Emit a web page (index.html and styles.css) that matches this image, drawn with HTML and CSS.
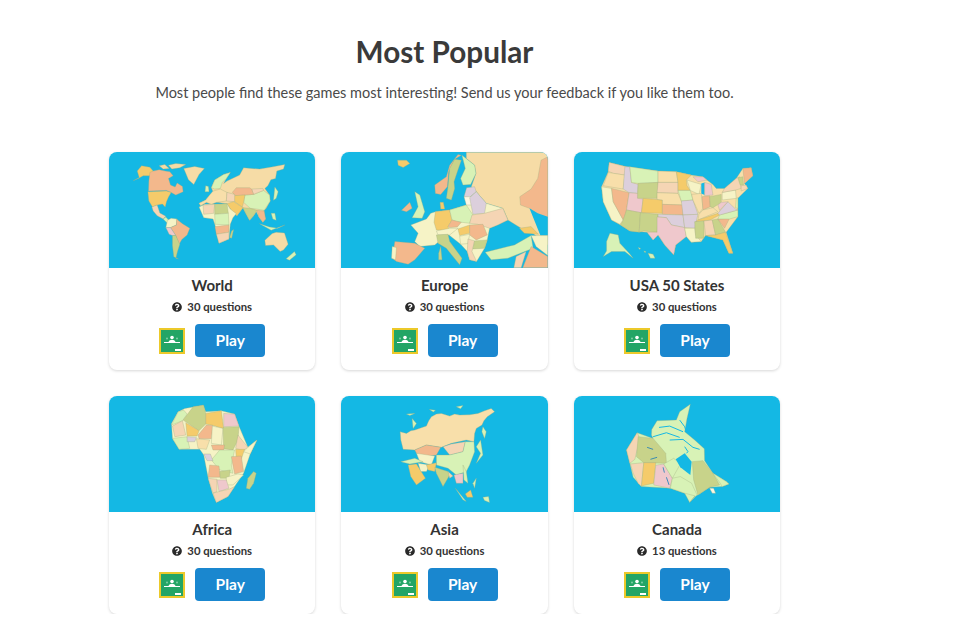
FILE: index.html
```html
<!DOCTYPE html>
<html lang="en">
<head>
<meta charset="utf-8">
<title>Most Popular</title>
<link rel="stylesheet" href="styles.css">
</head>
<body>
<svg class="defs" width="0" height="0" aria-hidden="true">
  <symbol id="q" viewBox="0 0 512 512"><path d="M504 256c0 136.997-111.043 248-248 248S8 392.997 8 256C8 119.083 119.043 8 256 8s248 111.083 248 248zM262.655 90c-54.497 0-89.255 22.957-116.549 63.758-3.536 5.286-2.353 12.415 2.715 16.258l34.699 26.31c5.205 3.947 12.621 3.008 16.665-2.122 17.864-22.658 30.113-35.797 57.303-35.797 20.429 0 45.698 13.148 45.698 32.958 0 14.976-12.363 22.667-32.534 33.976C247.128 238.528 216 254.941 216 296v4c0 6.627 5.373 12 12 12h56c6.627 0 12-5.373 12-12v-1.333c0-28.462 83.186-29.647 83.186-106.667 0-58.002-60.165-102-116.531-102zM256 338c-25.365 0-46 20.635-46 46 0 25.364 20.635 46 46 46s46-20.636 46-46c0-25.365-20.635-46-46-46z"/></symbol>
  <symbol id="gc" viewBox="0 0 26 26">
    <rect x="1" y="1" width="24" height="24" class="gc-bg"/>
    <circle cx="13" cy="9.500" r="1.800" class="gc-w"/>
    <path d="M9.500 14c.5-1.500 2-2.200 3.500-2.200s3 .7 3.500 2.200z" class="gc-w"/>
    <circle cx="8" cy="10.500" r="1" class="gc-f"/>
    <circle cx="18" cy="10.500" r="1" class="gc-f"/>
    <rect x="5" y="14" width="16" height="1" class="gc-w"/>
    <rect x="16" y="21" width="6" height="2" class="gc-w"/>
  </symbol>
</svg>
<main class="page">
  <header class="intro">
    <h1>Most Popular</h1>
    <p>Most people find these games most interesting! Send us your feedback if you like them too.</p>
  </header>
  <section class="grid">

    <article class="card">
      <svg class="map" viewBox="27 21 621 348"><g class="land">
        <polygon class="y" points="100,107 118,97 112,78 125,62 150,66 160,78 158,92 148,92 130,92 115,100"/>
        <polygon class="o" points="150,82 160,78 178,74 196,78 210,80 220,92 206,100 212,120 226,126 232,114 248,124 250,140 228,150 214,142 200,136 146,138 147,108"/>
        <polygon class="p" points="178,62 195,58 208,70 190,72"/>
        <polygon class="p" points="206,60 228,55 258,58 240,68 216,72"/>
        <polygon class="p" points="252,70 285,64 314,70 298,88 282,118 266,104"/>
        <polygon class="y" points="144,140 200,138 214,142 206,156 200,170 196,186 188,177 172,180 158,186 147,168"/>
        <polygon class="s" points="156,186 172,180 180,204 198,214 190,222 172,212 160,198"/>
        <polygon class="g" points="190,222 198,216 212,232 206,238"/>
        <polygon class="c" points="203,226 214,220 232,222 230,240 212,248 198,248"/>
        <polygon class="o" points="230,222 248,236 270,250 262,270 246,284 238,298 228,272 212,248 230,240"/>
        <polygon class="k" points="198,248 212,248 228,272 218,272 208,268"/>
        <polygon class="v" points="218,272 228,272 240,298 233,320 228,340 236,342 222,336 218,302"/>
        <polygon class="p" points="303,182 298,175 318,165 330,150 340,140 335,128 345,105 372,88 392,82 380,100 372,115 382,108 420,90 432,68 480,72 520,65 556,58 552,72 532,78 528,100 514,104 505,122 496,130 510,150 512,168 500,190 492,198 498,222 490,232 478,216 470,200 462,212 450,226 440,208 430,188 412,212 392,192 382,176 350,172 335,178 320,172"/>
        <polygon class="g" points="335,128 345,105 372,88 392,82 380,100 368,112 362,130 345,132"/>
        <polygon class="l" points="303,182 298,175 318,165 330,150 340,138 362,132 382,142 380,168 350,172 335,178 320,172"/>
        <polygon class="g" points="436,150 462,148 492,136 510,150 512,168 494,196 470,192 452,190 432,172"/>
        <polygon class="s" points="456,132 490,130 492,136 462,148"/>
        <polygon class="o" points="398,142 410,128 450,128 456,132 462,148 436,150 408,152"/>
        <polygon class="y" points="400,152 436,150 432,172 428,186 405,170"/>
        <polygon class="v" points="430,188 452,190 472,196 462,212 450,226 440,208"/>
        <polygon class="o" points="472,196 494,198 498,222 490,232 478,216"/>
        <polygon class="s" points="382,142 405,148 405,170 380,168"/>
        <polygon class="y" points="382,176 402,170 430,188 412,212 392,192"/>
        <polygon class="g" points="318,122 326,124 328,140 316,140"/>
        <polygon class="g" points="480,236 510,246 535,250 556,240 515,256"/>
        <polygon class="g" points="515,205 526,205 530,226 520,222"/>
        <polygon class="g" points="526,126 536,140 530,160 522,166"/>
        <polygon class="c" points="298,186 315,178 345,178 382,176 392,192 410,206 400,218 392,238 388,282 358,295 346,240 340,222 312,218"/>
        <polygon class="s" points="310,180 345,178 342,205 312,208"/>
        <polygon class="v" points="345,178 382,176 386,205 345,208"/>
        <polygon class="g" points="345,208 386,205 388,240 346,238"/>
        <polygon class="o" points="346,245 388,240 388,262 350,268"/>
        <polygon class="s" points="350,268 388,262 388,282 358,295"/>
        <polygon class="v" points="396,258 402,254 396,280 390,278"/>
        <polygon class="p" points="496,286 518,266 530,262 555,264 566,298 552,315 542,320 522,300 498,302"/>
        <polygon class="g" points="560,342 585,320 590,330 570,346"/>
      </g></svg>
      <div class="body">
        <h2>World</h2>
        <div class="meta"><svg class="qi"><use href="#q"/></svg><span>30 questions</span></div>
        <div class="actions"><svg class="gc"><use href="#gc"/></svg><a class="play">Play</a></div>
      </div>
    </article>

    <article class="card">
      <svg class="map" viewBox="18 21 621 348"><g class="land">
        <polygon class="p" points="395,21 640,21 640,300 595,265 560,250 520,225 505,190 455,175 425,140 410,125 424,85 420,60 395,40"/>
        <polygon class="o" points="556,155 590,132 610,100 620,45 640,35 640,218 610,210 585,190 558,180"/>
        <polygon class="b" points="585,190 610,205 640,215 640,272 618,272 602,232"/>
        <polygon class="y" points="188,45 215,45 225,55 205,67 190,60"/>
        <polygon class="o" points="300,120 335,95 345,60 370,28 380,30 360,42 342,80 338,125 318,148 302,145"/>
        <polygon class="v" points="340,125 345,70 360,42 380,45 368,80 358,110 360,130 350,165 335,160"/>
        <polygon class="g" points="382,30 420,60 424,85 408,118 385,120 378,100 392,70"/>
        <polygon class="g" points="240,140 255,150 270,200 262,220 232,218 250,185"/>
        <polygon class="o" points="200,196 225,172 232,190 215,200"/>
        <polygon class="y" points="316,172 326,172 330,192 318,192"/>
        <polygon class="d" points="396,128 420,125 425,140 405,158 388,155"/>
        <polygon class="c" points="228,240 275,222 288,205 302,200 345,195 395,180 405,158 425,140 455,175 505,190 520,225 465,250 458,285 450,310 426,350 405,345 398,320 378,298 340,268 300,300 255,305 240,290 250,265"/>
        <polygon class="y" points="302,200 345,195 352,225 340,245 345,258 305,255 298,232"/>
        <polygon class="g" points="345,195 395,180 415,210 405,235 365,230 352,225"/>
        <polygon class="w" points="388,155 415,155 415,180 395,180"/>
        <polygon class="d" points="405,158 425,140 455,175 450,205 415,208"/>
        <polygon class="s" points="412,210 450,205 505,190 520,225 490,240 465,250 430,238 405,235"/>
        <polygon class="o" points="340,245 352,225 380,232 368,246 345,248"/>
        <polygon class="c" points="305,258 345,250 370,250 345,270 310,270"/>
        <polygon class="y" points="370,252 405,240 405,265 375,272"/>
        <polygon class="o" points="405,240 445,238 458,270 425,285 405,270"/>
        <polygon class="v" points="305,270 340,268 345,290 382,340 375,360 335,310 310,295"/>
        <polygon class="c" points="375,274 405,268 400,296 378,298"/>
        <polygon class="s" points="400,282 420,288 412,320 426,350 405,345 398,320"/>
        <polygon class="v" points="420,288 458,285 450,310 415,312"/>
        <polygon class="v" points="312,325 318,305 322,345 312,345"/>
        <polygon class="o" points="180,290 240,295 270,310 240,345 220,358 185,350 172,340"/>
        <polygon class="c" points="172,305 185,308 182,345 170,340"/>
        <polygon class="g" points="452,322 540,300 590,272 596,310 520,340 470,345"/>
        <polygon class="y" points="555,250 590,245 612,268 570,265"/>
        <polygon class="c" points="590,272 640,272 640,332 605,305"/>
        <polygon class="o" points="565,369 590,305 640,335 640,369"/>
        <polygon class="s" points="538,369 545,335 575,320 560,369"/>
      </g></svg>
      <div class="body">
        <h2>Europe</h2>
        <div class="meta"><svg class="qi"><use href="#q"/></svg><span>30 questions</span></div>
        <div class="actions"><svg class="gc"><use href="#gc"/></svg><a class="play">Play</a></div>
      </div>
    </article>

    <article class="card">
      <svg class="map" viewBox="12 21 621 348"><g class="land">
        <polygon class="l" points="118,52 170,65 265,78 320,80 365,90 400,95 412,105 430,118 440,130 465,130 500,100 520,70 545,68 550,92 525,115 535,130 505,160 505,215 470,262 490,325 478,325 460,285 408,272 395,290 365,292 350,275 318,300 312,330 285,300 265,270 250,285 232,262 180,258 152,240 125,225 100,170 95,125 115,80"/>
        <polygon class="s" points="118,52 170,65 165,90 130,85 115,78"/>
        <polygon class="l" points="100,122 115,82 165,90 160,132"/>
        <polygon class="c" points="95,125 125,130 130,170 160,225 150,238 125,225 100,170"/>
        <polygon class="o" points="125,130 178,143 168,205 160,225 130,170"/>
        <polygon class="d" points="165,65 180,65 185,112 205,118 203,145 178,143 160,132"/>
        <polygon class="g" points="180,65 265,78 265,112 205,115 185,112"/>
        <polygon class="v" points="205,115 265,112 262,160 203,160"/>
        <polygon class="k" points="178,143 203,145 203,160 220,162 215,203 170,195"/>
        <polygon class="y" points="220,160 278,165 278,205 215,203"/>
        <polygon class="v" points="170,195 212,203 208,262 180,258 152,240 160,225"/>
        <polygon class="v" points="212,203 265,208 262,262 222,258 208,262"/>
        <polygon class="l" points="265,78 320,80 325,112 265,112"/>
        <polygon class="s" points="265,112 325,112 325,145 262,143"/>
        <polygon class="l" points="262,143 325,145 340,180 278,178 278,165 262,163"/>
        <polygon class="o" points="278,178 340,180 340,210 278,208"/>
        <polygon class="d" points="265,208 340,210 345,248 305,240 290,218 265,216"/>
        <polygon class="k" points="262,216 290,218 305,240 345,248 350,275 318,300 312,330 285,300 265,270 250,285 232,262 262,262"/>
        <polygon class="y" points="320,80 365,90 350,105 352,122 362,136 325,136 325,112"/>
        <polygon class="g" points="325,136 362,136 370,165 335,168"/>
        <polygon class="d" points="335,168 370,165 385,208 340,210"/>
        <polygon class="d" points="340,210 385,208 375,250 345,248"/>
        <polygon class="c" points="345,250 375,250 378,270 395,290 365,292 350,275"/>
        <polygon class="c" points="352,105 395,118 388,148 362,136"/>
        <polygon class="k" points="370,95 400,95 412,105 385,110"/>
        <polygon class="l" points="366,148 395,145 400,190 388,205 370,165"/>
        <polygon class="b" points="395,115 405,112 405,150 395,145"/>
        <polygon class="o" points="397,155 420,152 422,185 400,195"/>
        <polygon class="k" points="405,112 425,118 430,150 405,152"/>
        <polygon class="v" points="420,155 455,148 455,172 430,188 422,185"/>
        <polygon class="l" points="388,208 400,195 430,188 445,200 385,225"/>
        <polygon class="y" points="385,225 445,205 450,210 420,226 378,230"/>
        <polygon class="v" points="375,230 403,228 403,280 378,280"/>
        <polygon class="s" points="403,228 428,225 438,270 408,272"/>
        <polygon class="v" points="428,225 445,222 468,262 438,270"/>
        <polygon class="y" points="408,272 438,270 468,262 490,325 478,325 460,285"/>
        <polygon class="o" points="445,222 480,220 465,250"/>
        <polygon class="g" points="450,210 505,195 505,215 480,222 445,222"/>
        <polygon class="d" points="445,205 475,170 498,192 505,195 450,210"/>
        <polygon class="k" points="445,180 455,172 475,170 450,196"/>
        <polygon class="c" points="458,142 498,135 500,160 458,165"/>
        <polygon class="s" points="465,130 500,100 510,95 515,130 498,135 458,142"/>
        <polygon class="g" points="500,160 505,158 505,190 498,188"/>
        <polygon class="v" points="505,98 520,95 522,120 512,120"/>
        <polygon class="o" points="520,70 545,68 550,92 525,115"/>
        <polygon class="s" points="515,122 530,120 535,130 515,138"/>
        <polygon class="g" points="120,265 145,270 150,295 178,325 190,340 165,320 125,320 100,335 110,318 110,290"/>
        <polygon class="g" points="235,325 250,328 256,340 242,340"/>
        <polygon class="g" points="205,308 212,310 210,314"/>
        <polygon class="g" points="222,318 228,320 226,324"/>
      </g></svg>
      <div class="body">
        <h2>USA 50 States</h2>
        <div class="meta"><svg class="qi"><use href="#q"/></svg><span>30 questions</span></div>
        <div class="actions"><svg class="gc"><use href="#gc"/></svg><a class="play">Play</a></div>
      </div>
    </article>

    <article class="card">
      <svg class="map" viewBox="27 18 621 348"><g class="land">
        <polygon class="c" points="215,100 235,65 255,55 310,45 318,65 365,62 405,72 418,108 445,172 472,150 452,192 432,250 405,290 385,320 350,338 338,310 325,262 312,195 300,178 238,178 218,145"/>
        <polygon class="g" points="215,105 235,65 252,60 262,72 248,92"/>
        <polygon class="v" points="250,90 280,50 312,45 318,70 318,102 298,122"/>
        <polygon class="y" points="318,70 365,62 372,116 340,106 318,102"/>
        <polygon class="k" points="372,70 405,72 418,108 372,110"/>
        <polygon class="s" points="218,108 248,92 258,135 225,140"/>
        <polygon class="y" points="258,98 298,122 292,138 262,138"/>
        <polygon class="o" points="295,135 320,105 340,106 335,146 298,146"/>
        <polygon class="c" points="338,108 370,115 365,165 335,160"/>
        <polygon class="v" points="370,112 418,110 415,150 400,180 372,176"/>
        <polygon class="s" points="415,135 445,172 430,182 408,175"/>
        <polygon class="c" points="445,172 472,150 452,192 432,185"/>
        <polygon class="g" points="218,145 262,140 270,175 238,178"/>
        <polygon class="d" points="262,140 290,142 285,155 262,155"/>
        <polygon class="l" points="290,146 330,150 320,178 295,175"/>
        <polygon class="o" points="335,165 375,165 372,180 340,180"/>
        <polygon class="y" points="408,178 435,178 425,208 410,205"/>
        <polygon class="g" points="335,210 360,180 405,180 395,225 400,250 360,240 345,222"/>
        <polygon class="o" points="395,200 425,198 432,245 405,252"/>
        <polygon class="d" points="312,192 332,192 340,212 322,212"/>
        <polygon class="o" points="330,225 358,228 362,262 325,262"/>
        <polygon class="v" points="360,245 392,240 388,265 362,265"/>
        <polygon class="c" points="380,262 415,252 432,255 400,285 380,285"/>
        <polygon class="s" points="325,265 352,268 352,305 340,310"/>
        <polygon class="k" points="352,270 380,270 388,295 358,305"/>
        <polygon class="s" points="340,310 358,305 388,298 405,290 385,320 350,338"/>
        <polygon class="v" points="440,295 445,265 462,245 470,250 462,280 450,298"/>
      </g></svg>
      <div class="body">
        <h2>Africa</h2>
        <div class="meta"><svg class="qi"><use href="#q"/></svg><span>30 questions</span></div>
        <div class="actions"><svg class="gc"><use href="#gc"/></svg><a class="play">Play</a></div>
      </div>
    </article>

    <article class="card">
      <svg class="map" viewBox="18 18 621 348"><g class="land">
        <polygon class="l" points="196,125 215,130 228,122 240,120 262,112 275,108 282,92 290,80 305,72 320,70 345,78 360,72 375,75 405,74 430,70 450,62 470,55 480,65 458,80 448,92 442,105 425,115 420,130 418,155 395,150 350,160 320,172 275,165 240,180 205,178 198,150"/>
        <polygon class="o" points="240,180 275,165 318,172 305,195 270,200 245,190"/>
        <polygon class="s" points="325,170 350,162 392,155 385,185 345,195"/>
        <polygon class="g" points="305,195 345,195 385,185 392,155 418,155 420,185 405,225 395,245 365,255 340,235 305,225"/>
        <polygon class="c" points="245,190 300,198 290,225 255,215"/>
        <polygon class="g" points="198,215 240,205 265,215 225,222"/>
        <polygon class="y" points="220,225 245,222 272,265 245,285 228,260"/>
        <polygon class="c" points="250,220 285,225 275,245 258,245"/>
        <polygon class="y" points="275,225 305,218 300,245 280,240"/>
        <polygon class="v" points="300,232 340,245 345,255 325,290 305,250"/>
        <polygon class="s" points="340,245 355,258 345,265"/>
        <polygon class="k" points="358,255 385,250 385,280 365,280"/>
        <polygon class="g" points="385,225 395,245 400,280 388,270"/>
        <polygon class="g" points="362,295 395,335 385,330"/>
        <polygon class="y" points="392,312 408,300 415,322 398,322"/>
        <polygon class="g" points="445,322 462,320 465,338 450,332"/>
        <polygon class="g" points="425,170 438,150 445,195 425,220 438,190"/>
        <polygon class="g" points="445,110 455,125 450,145 442,125"/>
        <polygon class="g" points="232,85 245,100 235,115"/>
        <polygon class="g" points="415,280 425,265 420,295"/>
        <polygon class="g" points="284,58 302,60 296,66"/>
        <polygon class="g" points="365,50 385,46 378,56"/>
        <polygon class="g" points="215,72 240,70 225,76"/>
      </g></svg>
      <div class="body">
        <h2>Asia</h2>
        <div class="meta"><svg class="qi"><use href="#q"/></svg><span>30 questions</span></div>
        <div class="actions"><svg class="gc"><use href="#gc"/></svg><a class="play">Play</a></div>
      </div>
    </article>

    <article class="card">
      <svg class="map" viewBox="12 18 621 348"><g class="land">
        <polygon class="g" points="246,118 262,92 320,90 330,65 362,42 352,85 345,125 375,150 404,176 405,212 430,250 470,275 478,282 458,290 420,292 385,315 376,318 360,338 345,310 302,295 215,290 190,262 180,220 170,180 202,128 250,145 245,135"/>
        <polyline class="ch" points="268,112 300,108 340,125"/>
        <polyline class="ch" points="250,140 290,128 330,142"/>
        <polyline class="ch" points="330,90 345,110 350,125"/>
        <polyline class="ch" points="300,150 340,148 370,172 390,178"/>
        <polyline class="ch" points="345,170 355,185 350,190"/>
        <polygon class="s" points="170,180 202,128 210,145 195,208 180,220"/>
        <polygon class="v" points="205,140 250,145 288,190 290,220 222,218 200,200"/>
        <polygon class="s" points="182,222 222,218 215,290 205,280 190,250"/>
        <polygon class="y" points="222,218 258,218 252,280 215,288"/>
        <polygon class="k" points="258,226 282,222 308,265 300,295 252,285"/>
        <polygon class="g" points="282,222 312,205 332,222 308,265"/>
        <polygon class="g" points="308,265 332,260 366,280 382,315 360,338 376,318 345,310 302,295"/>
        <polygon class="v" points="368,215 400,212 430,250 450,285 420,292 385,315 372,270"/>
        <polygon class="g" points="430,250 470,275 478,282 458,290 452,280"/>
        <polygon class="w" points="420,295 432,295 438,310 428,310"/>
        <polygon class="b" points="318,208 345,190 366,215 362,255 332,232"/>
        <polyline class="ln" points="232,172 250,178"/>
        <polyline class="ln" points="242,208 262,202"/>
        <polyline class="ln" points="280,232 284,248"/>
        <polyline class="ln" points="290,262 298,285"/>
      </g></svg>
      <div class="body">
        <h2>Canada</h2>
        <div class="meta"><svg class="qi"><use href="#q"/></svg><span>13 questions</span></div>
        <div class="actions"><svg class="gc"><use href="#gc"/></svg><a class="play">Play</a></div>
      </div>
    </article>

  </section>
</main>
</body>
</html>
```
FILE: styles.css
```css
* { box-sizing: border-box; }
html, body { margin: 0; overflow: hidden; background: #fff; }
body { font-family: Lato, "Open Sans", sans-serif; color: #333; }
.defs { position: absolute; }
.page { width: 889px; }
.intro { text-align: center; padding-top: 32px; margin-bottom: 48px; }
h1 { margin: 0; font-size: 29.700px; line-height: 40px; font-weight: 700; color: #3a3a3a; }
.intro p { margin: 10px 0 0; font-size: 14.500px; line-height: 22px; color: #4a4a4a; }
.grid { display: grid; grid-template-columns: repeat(3, 206.400px); gap: 26px; padding-left: 109px; }
.card { height: 218px; border-radius: 8px; background: #fff; box-shadow: 0 1px 3px rgba(0,0,0,.16); overflow: hidden; display: flex; flex-direction: column; }
.map { display: block; width: 100%; height: 116px; background: #14b8e4; }
.land { filter: blur(.45px); }
.map polygon { stroke: #9fae80; stroke-width: 1; stroke-linejoin: round; }
.map .p { fill: #f6dca6; }
.map .o { fill: #f3b88c; }
.map .g { fill: #d8f2b6; }
.map .y { fill: #f5cb6a; }
.map .v { fill: #c8d38a; }
.map .k { fill: #efc8cc; }
.map .c { fill: #f6f3c6; }
.map .l { fill: #f8dfaa; }
.map .s { fill: #f5d5b4; }
.map .d { fill: #dccfdc; }
.map .w { fill: #fdf7e2; }
.map .b { fill: #14b8e4; stroke: none; }
.map .ch { fill: none; stroke: #14b8e4; stroke-width: 3; }
.map .ln { fill: none; stroke: #1f7fb8; stroke-width: 2.500; }
.body { display: flex; flex-direction: column; align-items: center; padding-top: 7px; }
h2 { margin: 0; font-size: 15px; line-height: 20px; font-weight: 700; color: #333; }
.meta { display: flex; align-items: center; gap: 5px; margin-top: 3px; font-size: 11.300px; line-height: 18px; font-weight: 700; color: #333; }
.qi { width: 10px; height: 10px; fill: #2a2a2a; }
.actions { display: flex; align-items: center; gap: 10px; margin-top: 8px; }
.gc { width: 26px; height: 26px; }
.gc-bg { fill: #23a566; stroke: #ecc92a; stroke-width: 2; }
.gc-w { fill: #fff; }
.gc-f { fill: #7fcda5; }
.play { display: block; width: 70px; height: 33px; border-radius: 4px; background: #1a87cf; color: #fff; font-size: 15.500px; font-weight: 700; line-height: 32px; text-align: center; }
```
